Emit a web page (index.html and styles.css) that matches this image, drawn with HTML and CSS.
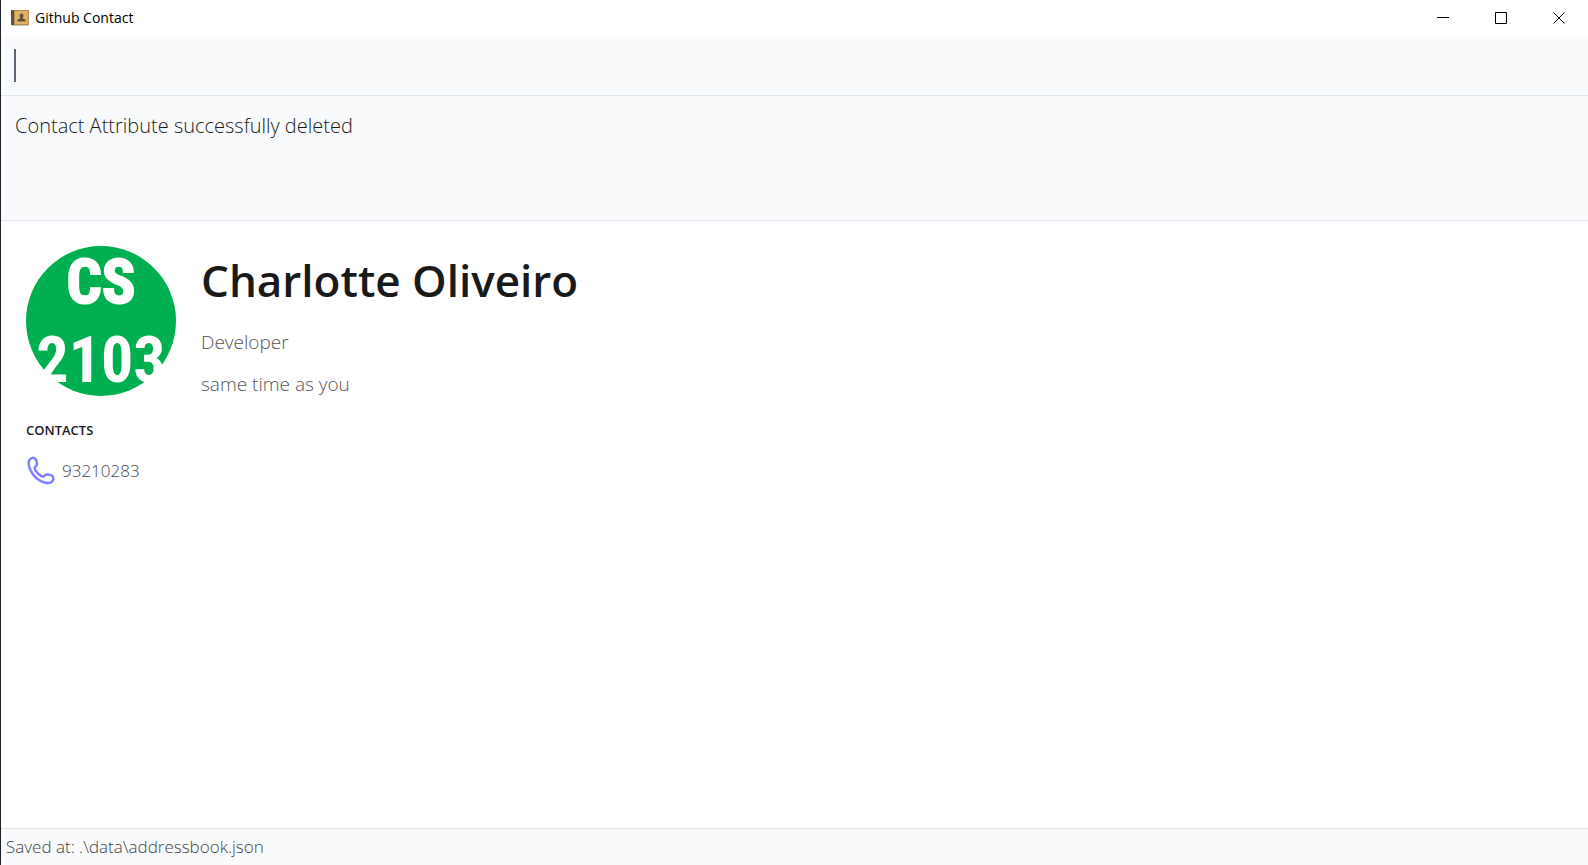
FILE: index.html
```html
<!DOCTYPE html>
<html lang="en">
<head>
<meta charset="utf-8">
<meta name="viewport" content="width=device-width, initial-scale=1">
<title>Github Contact</title>
<link rel="stylesheet" href="styles.css">
</head>
<body>
<div class="window">
  <header class="titlebar">
    <svg class="app-icon" viewBox="0 0 18 18" aria-hidden="true">
      <rect x="1" y="16" width="16" height="1" fill="#c9c4bc"/>
      <rect x="0" y="1" width="18" height="15" fill="#b98f4e"/>
      <rect x="4" y="2" width="13" height="13" fill="#e0b468"/>
      <rect x="0" y="1" width="3" height="15" fill="#62504a"/>
      <path d="M10.500 4.500a2 2 0 0 1 2 2c0 1.200-.800 1.700-.800 3l2.800 1v2h-8v-2l2.800-1c0-1.300-.800-1.800-.800-3a2 2 0 0 1 2-2z" fill="#62503c"/>
    </svg>
    <h1 class="app-title">Github Contact</h1>
    <button class="win-btn" type="button" aria-label="Minimize"><svg class="win-icon" viewBox="0 0 12 12"><path d="M0 5.500h12"/></svg></button>
    <button class="win-btn" type="button" aria-label="Maximize"><svg class="win-icon" viewBox="0 0 12 12"><path d="M.5.5h11v11H.5z"/></svg></button>
    <button class="win-btn" type="button" aria-label="Close"><svg class="win-icon" viewBox="0 0 12 12"><path d="M.5.5l11 11M11.500.5l-11 11"/></svg></button>
  </header>
  <div class="command">
    <span class="caret"></span>
    <input class="command-input" type="text" aria-label="Command">
  </div>
  <p class="result" role="status">Contact Attribute successfully deleted</p>
  <main class="profile">
    <section class="summary">
      <svg class="avatar" viewBox="0 0 150 150" role="img" aria-label="CS 2103">
        <rect width="150" height="150" rx="75" fill="#00b050"/>
        <text class="avatar-top" x="75" y="57">CS</text>
        <text class="avatar-bottom" x="75" y="136">2103</text>
      </svg>
      <div class="details">
        <h2 class="name">Charlotte Oliveiro</h2>
        <p class="line">Developer</p>
        <p class="line">same time as you</p>
      </div>
    </section>
    <h3 class="section-title">CONTACTS</h3>
    <div class="contact">
      <svg class="phone" viewBox="0 0 30 30" aria-hidden="true">
        <path d="M5 2.500C6.500 1.700 8.600 1.600 9.500 3c1 1.700 1.600 4 1.400 5.700-.2 1.500-2.500 2-2.300 3.400.4 2.800 4.800 7.700 8 8.500 1.600.4 2.200-1.800 3.700-2 2.100-.3 4.600.3 6 1.300 1.300 1 1.300 3.600.3 5-1.200 1.700-4.200 2.300-6.800 1.900C12 25.500 3.700 17 2.800 8.700 2.500 6.300 3 3.600 5 2.500z"/>
      </svg>
      <span class="number">93210283</span>
    </div>
  </main>
  <footer class="status">Saved at: .\data\addressbook.json</footer>
</div>
</body>
</html>
```
FILE: styles.css
```css
* {
  box-sizing: border-box;
}

body {
  margin: 0;
  background: #fff;
  color: #1a1a1a;
  font-family: "Open Sans", "Noto Sans", sans-serif;
  font-weight: 300;
}

h1, h2, h3, p {
  margin: 0;
}

.window {
  display: flex;
  flex-direction: column;
  min-height: 100vh;
  border-left: 1px solid #202124;
}

.titlebar {
  display: flex;
  align-items: center;
  height: 36px;
  padding-left: 10px;
}

.app-icon {
  width: 18px;
  height: 18px;
  margin-right: 6px;
}

.app-title {
  flex: 1;
  color: #000;
  font-size: 14px;
  font-weight: 400;
  line-height: 20px;
}

.win-btn {
  display: grid;
  place-items: center;
  width: 58px;
  height: 34px;
  padding: 0;
  border: 0;
  background: none;
}

.win-icon {
  width: 12px;
  height: 12px;
  fill: none;
  stroke: #000;
  stroke-width: 1;
}

.command {
  display: flex;
  align-items: center;
  height: 60px;
  padding: 0 13px;
  background: #f9fafc;
  border-bottom: 1px solid #dfe6ef;
}

.caret {
  width: 2px;
  height: 33px;
  background: #5a6472;
}

.command-input {
  flex: 1;
  height: 40px;
  padding: 0;
  border: 0;
  outline: 0;
  background: none;
  font: inherit;
  font-size: 20px;
}

.result {
  min-height: 125px;
  padding: 14px;
  background: #f9fafc;
  border-bottom: 1px solid #dfe6ef;
  font-size: 20px;
  line-height: 32px;
}

.profile {
  flex: 1;
  padding: 25px;
}

.summary {
  display: flex;
  gap: 25px;
}

.avatar {
  flex: none;
  width: 150px;
  height: 150px;
  overflow: visible;
}

.avatar text {
  fill: #fff;
  stroke: #fff;
  font-family: "Roboto Condensed", Roboto, sans-serif;
  font-weight: 700;
  text-anchor: middle;
}

.avatar-top {
  font-size: 62px;
  stroke-width: 2;
}

.avatar-bottom {
  font-size: 64px;
  stroke-width: 0;
}

.name {
  margin-bottom: 12px;
  font-size: 44px;
  font-weight: 600;
  line-height: 68px;
}

.line {
  color: #555;
  font-size: 19px;
  line-height: 32px;
}

.line + .line {
  margin-top: 10px;
}

.section-title {
  margin-top: 20px;
  font-size: 13px;
  font-weight: 600;
  line-height: 20px;
}

.contact {
  display: flex;
  align-items: center;
  gap: 6px;
  margin-top: 16px;
}

.phone {
  width: 30px;
  height: 30px;
  fill: none;
  stroke: #8080fa;
  stroke-width: 2.5;
}

.number {
  color: #445;
  font-size: 17px;
  line-height: 30px;
}

.status {
  padding: 4px 5px;
  background: #f9fafc;
  border-top: 1px solid #dfe2e6;
  color: #444;
  font-size: 17px;
  line-height: 28px;
}
```
